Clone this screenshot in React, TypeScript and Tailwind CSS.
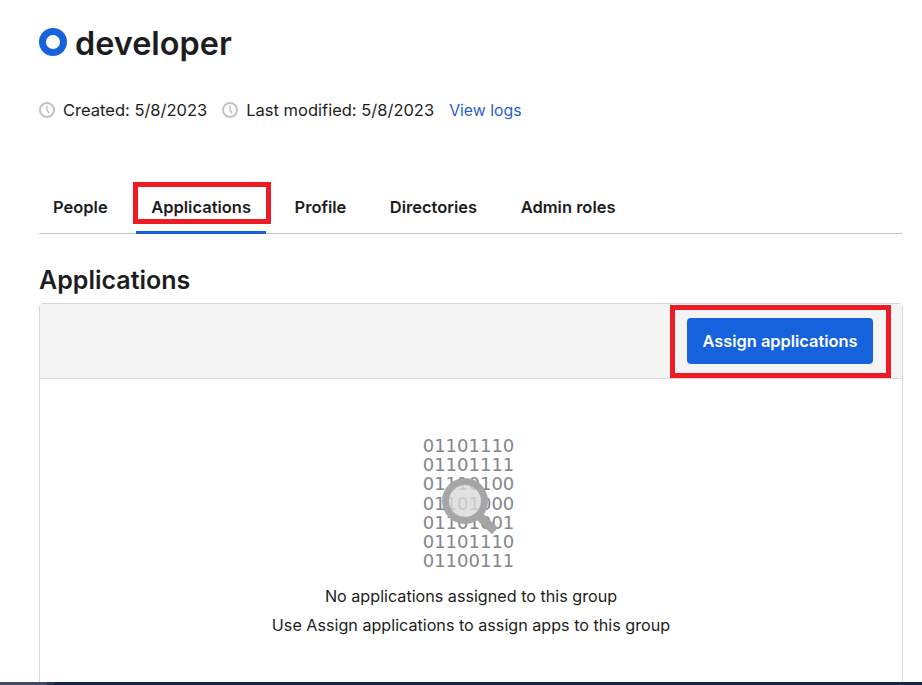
import React from "react";

function Clock() {
  return (
    <svg width="16" height="16" viewBox="0 0 16 16" fill="none" className="shrink-0">
      <circle cx="8" cy="8" r="7" stroke="#c1c3ca" strokeWidth="2" />
      <path d="M8 3.6V8l2.2 3.4" stroke="#c1c3ca" strokeWidth="1.4" />
    </svg>
  );
}

const tabs = ["People", "Applications", "Profile", "Directories", "Admin roles"];
const binary = ["01101110", "01101111", "01110100", "01101000", "01101001", "01101110", "01100111"];

export default function App() {
  return (
    <div className="relative h-[685px] w-[922px] overflow-hidden bg-white font-['Inter','Liberation_Sans',sans-serif] text-[#1d1d21]">
      <div className="pl-[39px] pr-5">
        <div className="flex h-[88px] items-center gap-2">
          <div className="mb-[4px] h-7 w-7 rounded-full border-[7px] border-[#1662dd]" />
          <h1 className="text-[32.4px] font-semibold leading-none">developer</h1>
        </div>
        <div className="mt-[11px] flex h-[22px] items-center text-[16.5px]">
          <Clock />
          <span className="ml-2">Created: 5/8/2023</span>
          <span className="ml-[15px]"><Clock /></span>
          <span className="ml-2">Last modified: 5/8/2023</span>
          <span className="ml-[15px] mt-px text-[15.8px] text-[#2b5fd0]">View logs</span>
        </div>
        <div className="mt-[60px] flex h-[53px] gap-[13.5px] border-b border-[#c1c3ca]">
          {tabs.map((t, i) => (
            <div
              key={t}
              className={
                "flex h-[53px] items-center border-b-[3px] px-[15px] pt-[2px] text-[16.5px] font-semibold " +
                (i === 0 ? "-ml-px " : "") +
                (t === "Applications" ? "border-[#1662dd]" : "border-transparent")
              }
            >
              {t}
            </div>
          ))}
        </div>
        <h2 className="mt-[29px] text-[25px] font-semibold leading-[34px]">Applications</h2>
        <div className="mt-[6px] h-[400px] w-[864px] rounded-t border border-[#d7d7dc]">
          <div className="flex h-[75px] items-center justify-end border-b border-[#d7d7dc] bg-[#f4f4f4] pr-[29px]">
            <button className="h-[46px] w-[186px] rounded bg-[#1662dd] pt-px text-[16.4px] font-semibold text-white">
              Assign applications
            </button>
          </div>
          <div className="flex flex-col items-center pt-[57px]">
            <div className="relative mr-[5px] font-['DejaVu_Sans',sans-serif] text-[18px] leading-[19.17px] text-[#85858c]">
              {binary.map((b) => (
                <div key={b}>{b}</div>
              ))}
              <svg width="64" height="64" viewBox="0 0 64 64" className="absolute left-[16px] top-[40px]">
                <circle cx="26" cy="25" r="19.5" fill="#d9d9d9" fillOpacity="0.8" stroke="#a6a6a6" strokeWidth="7" />
                <path d="M41 41L56 55" stroke="#a6a6a6" strokeWidth="9" />
              </svg>
            </div>
            <p className="mt-[14px] text-[16.15px] leading-6">No applications assigned to this group</p>
            <p className="mt-[5px] text-[16.15px] leading-6">Use Assign applications to assign apps to this group</p>
          </div>
        </div>
      </div>
      <div className="absolute bottom-0 left-0 flex h-[3px] w-full bg-[#16264a]">
        <div className="w-[47px] bg-[#3d4a68]" />
        <div className="w-[7px] bg-[#2b3650]" />
      </div>
      <div className="absolute left-[133px] top-[182px] h-[42px] w-[138px] border-[5px] border-[#ed1c24]" />
      <div className="absolute left-[670px] top-[305px] h-[73px] w-[221px] border-[5px] border-[#ed1c24]" />
    </div>
  );
}
